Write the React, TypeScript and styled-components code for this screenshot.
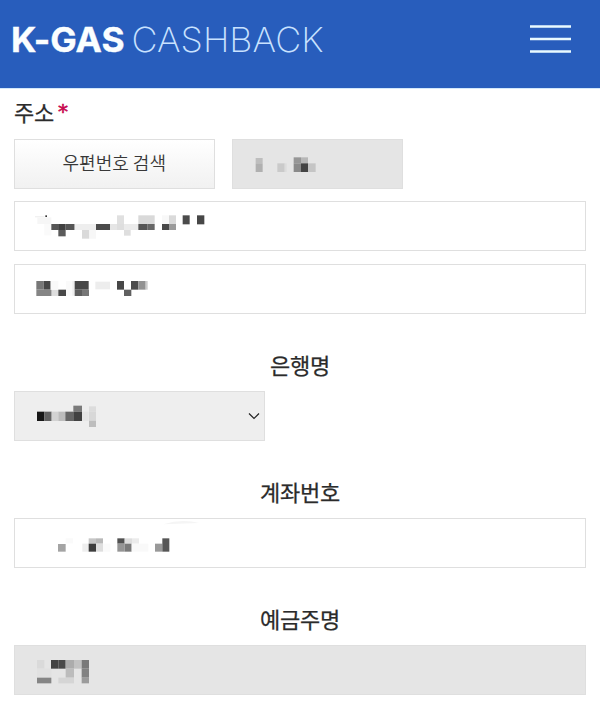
import React from "react";
import styled, { createGlobalStyle } from "styled-components";

const GlobalStyle = createGlobalStyle`
  *, *::before, *::after { box-sizing: border-box; }
  body {
    margin: 0;
    background: #fff;
    color: #2b2b2b;
    font-family: "Noto Sans CJK KR", "Noto Sans", sans-serif;
  }
`;

const Page = styled.div`
  width: 600px;
  height: 726px;
  overflow: hidden;
  background: #fff;
`;

const Header = styled.header`
  display: flex;
  align-items: flex-start;
  justify-content: space-between;
  height: 88px;
  padding: 20px 29px 0 10px;
  background: #285dbc;
  box-shadow: 0 1px 0 #d3e8fb;
`;

const Logo = styled.svg`
  display: block;
  width: 320px;
  height: 40px;
  font-family: Inter, sans-serif;
  font-size: 34.5px;
  font-feature-settings: "calt" 0;
`;

const MenuButton = styled.button`
  display: flex;
  flex-direction: column;
  margin-top: 5px;
  padding: 0;
  border: 0;
  background: none;
`;

const MenuLines = styled.svg`
  display: block;
  width: 41px;
  height: 29px;
`;

const Form = styled.form`
  display: flex;
  flex-direction: column;
  padding: 8px 14px 0;
`;

const Label = styled.label<{ $center?: boolean }>`
  display: flex;
  align-items: center;
  justify-content: ${(p) => (p.$center ? "center" : "flex-start")};
  height: ${(p) => (p.$center ? "30px" : "29px")};
  margin-top: ${(p) => (p.$center ? "35px" : "0")};
  margin-bottom: ${(p) => (p.$center ? "12px" : "14px")};
  font-size: 22px;
  font-weight: 400;
  line-height: 30px;
  letter-spacing: -0.3px;
  -webkit-text-stroke: 0.25px currentColor;
`;

const Required = styled.span`
  margin-left: 4px;
  color: #c8094f;
  font-family: "DejaVu Sans", sans-serif;
  font-size: 20px;
  -webkit-text-stroke: 0.6px currentColor;
`;

const Row = styled.div`
  display: flex;
  gap: 17px;
  margin-bottom: 12px;
`;

const SearchButton = styled.button`
  width: 200.5px;
  height: 50px;
  padding: 0 0 4px;
  border: 1px solid #dfdfdf;
  background: linear-gradient(#fff, #f1f1f1);
  color: #383838;
  font-family: inherit;
  font-size: 18px;
  font-weight: 350;
`;

const Field = styled.div<{ $width?: number; $bg?: string; $gap?: number }>`
  display: flex;
  align-items: center;
  justify-content: space-between;
  width: ${(p) => (p.$width ? `${p.$width}px` : "100%")};
  height: 50px;
  margin-bottom: ${(p) => p.$gap ?? 0}px;
  border: 1px solid #dfdfdf;
  background: ${(p) => p.$bg ?? "#fff"};
`;

const Mask = styled.svg<{ $width: number }>`
  display: block;
  flex: none;
  width: ${(p) => p.$width}px;
  height: 48px;
`;

const Chevron = styled.svg`
  width: 12px;
  height: 8px;
  margin-right: 4px;
`;

/* x, y, width, height, fill; three units to a pixel */
type Cell = [number, number, number, number, string];

const zipCells: Cell[] = [
  [92, 84, 21, 16, "#bebebe"], [92, 100, 21, 26, "#b0b0b0"],
  [157, 100, 22, 26, "#cacaca"], [179, 100, 6, 26, "#dcdcdc"],
  [206, 82, 22, 18, "#969696"], [228, 82, 21, 18, "#b7b7b7"],
  [206, 100, 22, 26, "#8a8a8a"], [228, 100, 21, 26, "#444"],
  [249, 100, 23, 26, "#c5c5c5"],
];

const addressCells: Cell[] = [
  [45, 33, 28, 4, "#f1f1f1"], [52, 37, 42, 20, "#f6f6f6"], [76, 31, 5, 5, "#333"],
  [73, 57, 21, 34, "#fafafa"],
  [94, 57, 23, 18, "#565656"], [117, 57, 20, 18, "#404040"], [137, 57, 27, 18, "#555"],
  [115, 75, 22, 19, "#5b5b5b"], [164, 57, 64, 18, "#eee"],
  [186, 75, 22, 26, "#dadada"], [208, 75, 20, 26, "#f7f7f7"],
  [228, 57, 42, 18, "#4b4b4b"], [270, 57, 21, 18, "#e5e5e5"],
  [291, 31, 21, 26, "#e0e0e0"], [291, 57, 21, 18, "#dedede"], [312, 57, 43, 18, "#ebebeb"],
  [312, 75, 20, 17, "#dedede"],
  [355, 31, 49, 26, "#d9d9d9"], [355, 57, 28, 18, "#555"], [383, 57, 21, 18, "#676767"],
  [426, 31, 21, 26, "#f8f8f8"], [447, 31, 21, 26, "#dadada"],
  [426, 57, 21, 18, "#484848"], [447, 57, 21, 18, "#9b9b9b"],
  [488, 31, 21, 27, "#4b4b4b"], [531, 31, 22, 27, "#474747"],
];

const detailCells: Cell[] = [
  [49, 33, 22, 26, "#777"], [71, 33, 21, 26, "#474747"],
  [49, 59, 46, 19, "#858585"], [95, 59, 20, 19, "#dedede"],
  [92, 33, 23, 26, "#f9f9f9"], [115, 59, 23, 19, "#484848"], [138, 33, 21, 44, "#fafafa"],
  [157, 33, 7, 44, "#eee"], [164, 33, 42, 26, "#474747"],
  [164, 59, 22, 19, "#5e5e5e"], [186, 59, 21, 19, "#777"],
  [226, 35, 44, 23, "#ededed"], [291, 33, 21, 26, "#474747"],
  [312, 59, 22, 19, "#606060"], [333, 33, 22, 26, "#4c4c4c"],
  [355, 33, 22, 26, "#929292"], [377, 33, 6, 26, "#ccc"],
];

const bankCells: Cell[] = [
  [81, 80, 22, 28, "#171717"], [103, 80, 22, 28, "#616161"],
  [125, 80, 20, 28, "#d2d2d2"], [145, 80, 21, 28, "#bcbcbc"],
  [166, 80, 26, 28, "#666"], [190, 62, 26, 18, "#7a7a7a"],
  [192, 80, 24, 28, "#414141"], [216, 80, 20, 28, "#e6e6e6"],
  [237, 64, 21, 16, "#dcdcdc"], [237, 80, 21, 27, "#d8d8d8"],
  [237, 107, 21, 19, "#bdbdbd"],
];

const accountCells: Cell[] = [
  [84, 102, 23, 23, "#a4a4a4"], [107, 85, 22, 15, "#fafafa"],
  [157, 101, 19, 24, "#eee"], [176, 85, 22, 16, "#c6c6c6"],
  [198, 85, 21, 16, "#b9b9b9"], [176, 101, 22, 24, "#3d3d3d"],
  [198, 101, 21, 24, "#dedede"], [219, 101, 22, 24, "#fafafa"],
  [262, 85, 22, 16, "#515151"], [284, 85, 22, 16, "#dedede"],
  [306, 85, 21, 16, "#ebebeb"], [262, 101, 22, 24, "#959595"],
  [284, 101, 21, 24, "#7a7a7a"], [305, 101, 50, 24, "#f9f9f9"],
  [375, 101, 22, 24, "#999"], [397, 85, 21, 40, "#565656"],
];

const holderCells: Cell[] = [
  [81, 60, 22, 26, "#dadada"], [81, 86, 44, 27, "#e1e1e1"],
  [81, 113, 43, 17, "#858585"],
  [123, 60, 22, 26, "#434343"], [145, 60, 22, 26, "#494949"],
  [167, 60, 25, 26, "#acacac"], [192, 60, 23, 26, "#c2c2c2"],
  [167, 86, 25, 27, "#bcbcbc"], [145, 113, 47, 17, "#d5d5d5"],
  [215, 60, 22, 26, "#797979"], [215, 86, 22, 27, "#828282"],
  [215, 113, 22, 17, "#9b9b9b"],
];

function MaskedValue({
  cells, x, y, width, children,
}: { cells: Cell[]; x: number; y: number; width: number; children?: React.ReactNode }) {
  return (
    <Mask $width={width} viewBox={`${x} ${y} ${width * 3} 144`} aria-hidden="true">
      {cells.map(([cx, cy, w, h, fill], i) => (
        <rect key={i} x={cx} y={cy} width={w} height={h} fill={fill} />
      ))}
      {children}
    </Mask>
  );
}

export default function App() {
  return (
    <>
      <GlobalStyle />
      <Page>
        <Header>
          <Logo viewBox="10 20 320 40">
            <text x="11" y="52" fill="#fafeff" stroke="#fafeff" strokeWidth="0.4" fontWeight="700" textLength="113.5" lengthAdjust="spacingAndGlyphs">K-GAS</text>
            <text x="131.5" y="52" fill="#c9e2ff" fontWeight="200" textLength="192" lengthAdjust="spacingAndGlyphs">CASHBACK</text>
          </Logo>
          <MenuButton type="button" aria-label="메뉴">
            <MenuLines viewBox="0 0 41 29" stroke="#e9faff" strokeWidth="2.5">
              <path d="M0 1.5H41M0 14H41M0 26.5H41" />
            </MenuLines>
          </MenuButton>
        </Header>
        <Form>
          <Label>주소<Required>*</Required></Label>
          <Row>
            <SearchButton type="button">우편번호 검색</SearchButton>
            <Field $width={171} $bg="#e5e5e5">
              <MaskedValue cells={zipCells} x={24} y={30} width={120} />
            </Field>
          </Row>
          <Field $gap={13}>
            <MaskedValue cells={addressCells} x={-15} y={-9} width={220} />
          </Field>
          <Field>
            <MaskedValue cells={detailCells} x={-15} y={-15} width={200} />
          </Field>
          <Label $center>은행명</Label>
          <Field $width={251} $bg="#eee">
            <MaskedValue cells={bankCells} x={15} y={21} width={120} />
            <Chevron viewBox="0 0 12 8" fill="none" stroke="#222" strokeWidth="1.2">
              <path d="M1 1.5 6 6.5 11 1.5" />
            </Chevron>
          </Field>
          <Label $center>계좌번호</Label>
          <Field>
            <MaskedValue cells={accountCells} x={-45} y={27} width={220}>
              <path d="M400 43Q455 25 508 39Z" fill="#f5f5f5" />
            </MaskedValue>
          </Field>
          <Label $center>예금주명</Label>
          <Field $bg="#e5e5e5">
            <MaskedValue cells={holderCells} x={15} y={18} width={120} />
          </Field>
        </Form>
      </Page>
    </>
  );
}
